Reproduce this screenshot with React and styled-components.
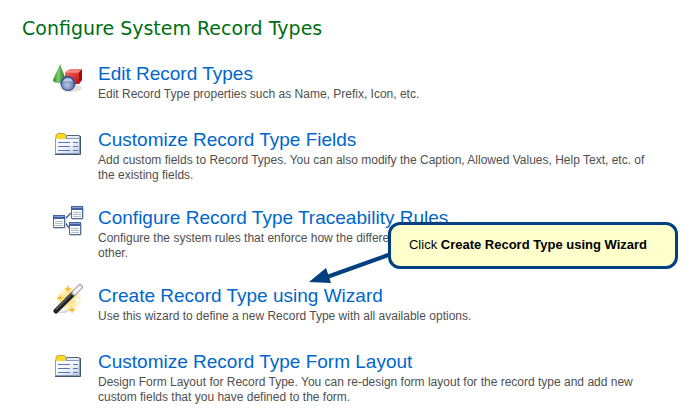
import React from "react";
import styled, {createGlobalStyle} from "styled-components";

const Colors = {
    heading: "#006e12",
    link: "#0066cc",
    text: "#4f4f4f",
    callout: "#003f80",
    calloutBg: "#ffffcc",
};

const GlobalStyle = createGlobalStyle`
  body {
    margin: 0;
    background: #fff;
    font-family: "Liberation Sans", Arial, sans-serif;
  }
`;

const Page = styled.main`
  position: relative;
  padding: 16px 30px 0 22px;
`;

const Heading = styled.h1`
  margin: 0 0 22px;
  font: 400 19px/24px "DejaVu Sans", Verdana, sans-serif;
  color: ${Colors.heading};
`;

const List = styled.ul`
  margin: 0;
  padding: 0 0 0 30px;
  list-style: none;
`;

const Row = styled.li`
  display: flex;
  align-items: flex-start;
  gap: 14px;
  min-height: 43px;
  margin-bottom: 23px;
`;

const IconBox = styled.div`
  flex: none;
  width: 32px;
  height: 32px;
  svg {
    display: block;
  }
`;

const Title = styled.a`
  display: block;
  margin-bottom: 2px;
  font-size: 19px;
  line-height: 23px;
  color: ${Colors.link};
  text-decoration: none;
`;

const Description = styled.p`
  margin: 0;
  font-size: 12px;
  line-height: 15px;
  color: ${Colors.text};
`;

const Callout = styled.aside`
  position: absolute;
  top: 222px;
  right: 12px;
  box-sizing: border-box;
  padding: 13px 28px 15px 18px;
  border: 3px solid ${Colors.callout};
  border-radius: 12px;
  background: ${Colors.calloutBg};
  font-size: 13px;
  line-height: 13px;
  white-space: nowrap;
  color: #000;
`;

const Arrow = styled.svg`
  position: absolute;
  right: 100%;
  top: 26px;
`;

const ShapesIcon = () => (
    <svg width="32" height="32" viewBox="0 0 32 32" aria-hidden="true">
        <defs>
            <linearGradient id="cone">
                <stop offset="0" stopColor="#237f27"/>
                <stop offset=".4" stopColor="#7bd070"/>
                <stop offset="1" stopColor="#16651b"/>
            </linearGradient>
            <linearGradient id="cube" x2="1" y2="1">
                <stop offset="0" stopColor="#f06359"/>
                <stop offset="1" stopColor="#c40e0e"/>
            </linearGradient>
            <radialGradient id="ball" cx=".45" cy=".6">
                <stop offset="0" stopColor="#b7c9e8"/>
                <stop offset=".6" stopColor="#7f95c0"/>
                <stop offset="1" stopColor="#42578d"/>
            </radialGradient>
        </defs>
        <ellipse cx="19" cy="26" rx="11" ry="4" fill="#000" opacity=".12"/>
        <path d="M8 2L1 18q0 3 6 3t7-3z" fill="url(#cone)"/>
        <path d="M13 10l5-3h12l-3 3z" fill="#f47b70"/>
        <path d="M13 10h14v12H13z" fill="url(#cube)"/>
        <path d="M27 10l3-3v11l-3 4z" fill="#a90b0b"/>
        <path d="M13 10h14" stroke="#ffa69d"/>
        <circle cx="16" cy="21.500" r="7.500" fill="url(#ball)"/>
        <circle cx="16" cy="21.500" r="7" fill="none" stroke="#3f5488"/>
        <path d="M11 20q1-4 5-4t5 4q-5-2-10 0z" fill="#dce6f6" opacity=".75"/>
    </svg>
);

const FolderIcon = () => (
    <svg width="32" height="32" viewBox="0 0 32 32" aria-hidden="true">
        <defs>
            <linearGradient id="folder" x2="1" y2="1">
                <stop offset="0" stopColor="#fff"/>
                <stop offset=".5" stopColor="#f3f6fc"/>
                <stop offset="1" stopColor="#bccbe5"/>
            </linearGradient>
        </defs>
        <g transform="translate(0 2)">
            <path d="M4 7V5l2-1.500h6L14 5v4H4z" fill="#ffda25" stroke="#c5a443"/>
            <path d="M14.500 5.500h13v4h-13z" fill="#e7edf7" stroke="#8296b3"/>
            <path d="M15 5.500h12" stroke="#50647e"/>
            <path d="M3.500 8.500h24v15h-24z" fill="url(#folder)" stroke="#8b9bb5"/>
            <path d="M4 8.500h10" stroke="#f4d543"/>
            <path d="M28.500 6v18.500H3" fill="none" stroke="#405575"/>
            <path d="M6 12.500h12m3 0h5M6 16.500h12m3 0h5M6 20.500h12m3 0h5" stroke="#5579b8"/>
        </g>
    </svg>
);

const MiniWindow = ({x, y}) => (
    <g transform={`translate(${x} ${y})`}>
        <path d="M1 13.500h11.500V1" fill="none" stroke="#cbd0d7"/>
        <path d="M.5.5h11v12H.5z" fill="#f8fafc" stroke="#536d93"/>
        <path d="M0 0h12v4H0z" fill="#4163a4"/>
        <path d="M1 1.500h10" stroke="#839fd0"/>
        <path d="M2 6.500h8M2 8.500h8M2 10.500h8" stroke="#b1bfcb"/>
    </g>
);

const RelationsIcon = () => (
    <svg width="32" height="32" viewBox="0 0 32 32" aria-hidden="true">
        <path d="M12 14l7-7M12 15l5 7" stroke="#4d6391" strokeWidth="1.500"/>
        <MiniWindow x={1} y={9}/>
        <MiniWindow x={19} y={0}/>
        <MiniWindow x={17} y={16}/>
    </svg>
);

const WandIcon = () => (
    <svg width="32" height="32" viewBox="0 0 32 32" aria-hidden="true">
        <defs>
            <radialGradient id="glow">
                <stop offset="0" stopColor="#ffd861"/>
                <stop offset=".6" stopColor="#ffe9a5" stopOpacity=".8"/>
                <stop offset="1" stopColor="#fff" stopOpacity="0"/>
            </radialGradient>
        </defs>
        <circle cx="17" cy="15" r="15" fill="url(#glow)"/>
        <path d="M8 10l1 3 3 1-3 1-1 3-1-3-3-1 3-1zM16 1l1 3 3 1-3 1-1 3-1-3-3-1 3-1zM20 22l1 3 3 1-3 1-1 3-1-3-3-1 3-1z" fill="#f5b929"/>
        <path d="M25 11l1 4 4 1-4 1-1 4-1-4-4-1 4-1z" fill="#fff"/>
        <path d="M4 29h10l5-4z" fill="#000" opacity=".15"/>
        <path d="M4 27L28 3" stroke="#202327" strokeWidth="5" strokeLinecap="round"/>
        <path d="M22 9L28 3" stroke="#a8abb0" strokeWidth="5" strokeLinecap="round"/>
        <path d="M22.500 8.500L28 3" stroke="#f5f5f7" strokeWidth="3.500" strokeLinecap="round"/>
        <path d="M4 25.500L20 9.500" stroke="#92979e"/>
    </svg>
);

const items = [
    {
        icon: ShapesIcon,
        title: "Edit Record Types",
        text: "Edit Record Type properties such as Name, Prefix, Icon, etc.",
    },
    {
        icon: FolderIcon,
        title: "Customize Record Type Fields",
        text: "Add custom fields to Record Types. You can also modify the Caption, Allowed Values, Help Text, etc. of the existing fields.",
    },
    {
        icon: RelationsIcon,
        title: "Configure Record Type Traceability Rules",
        text: "Configure the system rules that enforce how the different Record Types are allowed to be linked to each other.",
    },
    {
        icon: WandIcon,
        title: "Create Record Type using Wizard",
        text: "Use this wizard to define a new Record Type with all available options.",
    },
    {
        icon: FolderIcon,
        title: "Customize Record Type Form Layout",
        text: "Design Form Layout for Record Type. You can re-design form layout for the record type and add new custom fields that you have defined to the form.",
    },
];

const App = () => (
    <Page>
        <GlobalStyle/>
        <Heading>Configure System Record Types</Heading>
        <List>
            {items.map(({icon: Icon, title, text}) => (
                <Row key={title}>
                    <IconBox><Icon/></IconBox>
                    <div>
                        <Title href="#">{title}</Title>
                        <Description>{text}</Description>
                    </div>
                </Row>
            ))}
        </List>
        <Callout>
            <Arrow width="82" height="36" viewBox="0 0 82 36" aria-hidden="true">
                <path d="M82 3L18 26" stroke={Colors.callout} strokeWidth="4"/>
                <path d="M0 31L17 17L22 32z" fill={Colors.callout}/>
            </Arrow>
            Click <b>Create Record Type using Wizard</b>
        </Callout>
    </Page>
);

export default App;
